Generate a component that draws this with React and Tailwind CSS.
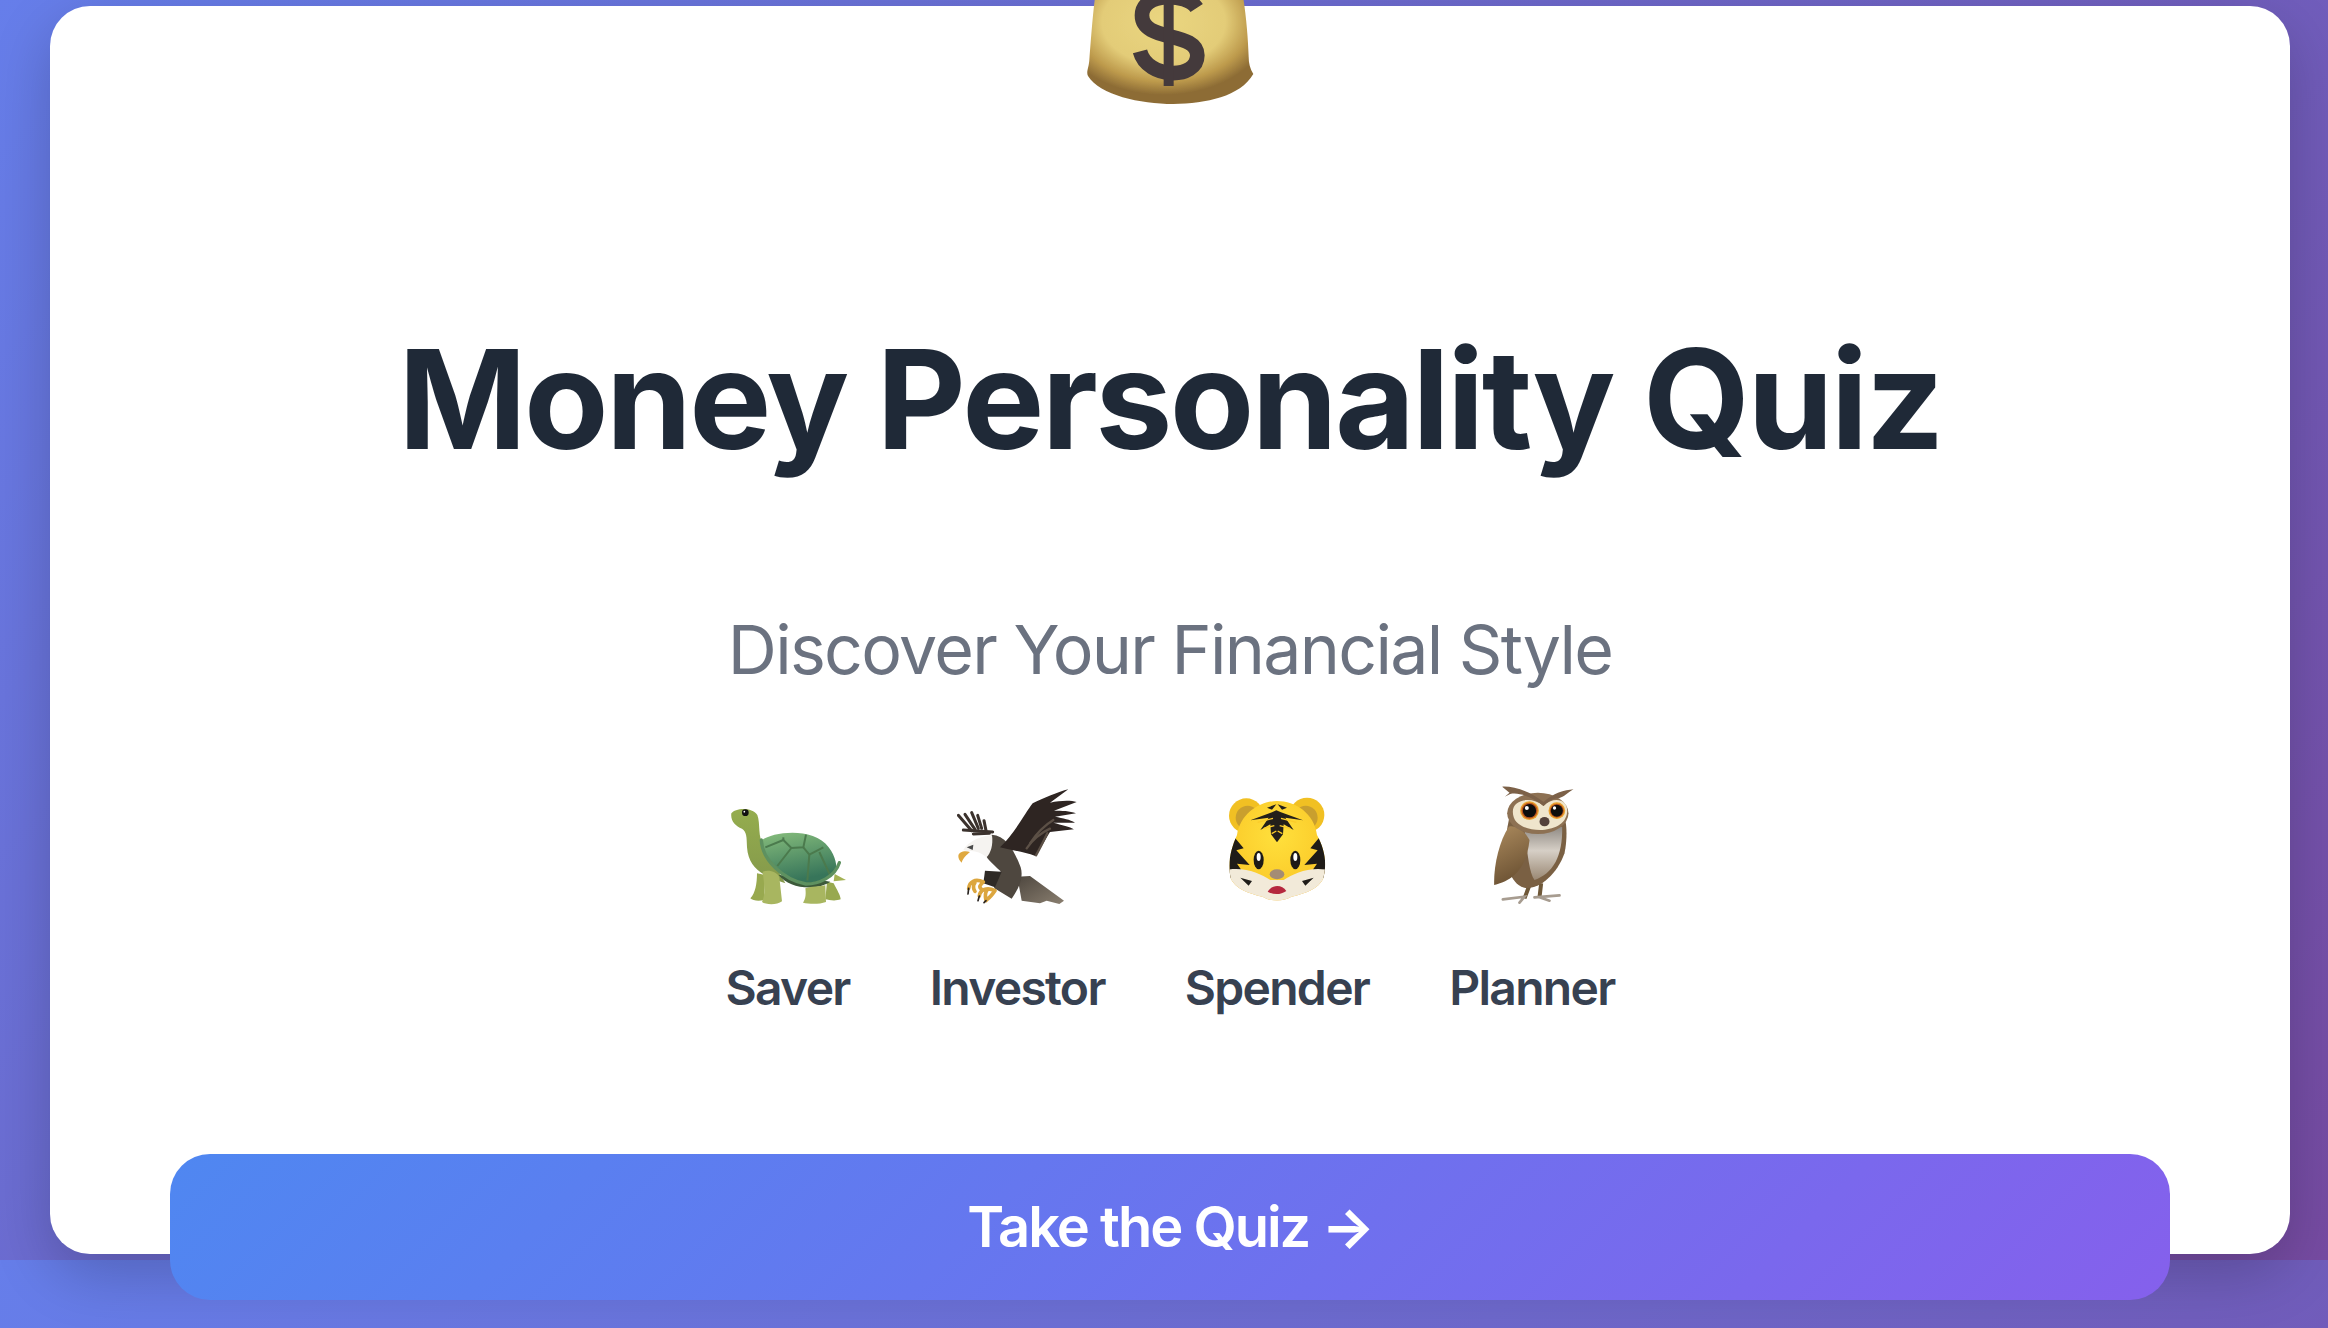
import React from 'react'

const MoneyBag = () => (
    <svg viewBox="240 0 540 330" className="w-[180px] h-[110px] -mt-[6px] shrink-0 overflow-visible">
        <defs>
            <radialGradient id="bagFill" cx="46%" cy="28%" r="64%">
                <stop offset="0%" stopColor="#ead680" />
                <stop offset="58%" stopColor="#e3cc78" />
                <stop offset="82%" stopColor="#bd9a4c" />
                <stop offset="100%" stopColor="#8d6c35" />
            </radialGradient>
            <filter id="bagSoft"><feGaussianBlur stdDeviation="2" /></filter>
        </defs>
        <path
            d="M288 -30 C278 40 272 130 268 180 C266 205 258 215 264 228 C300 285 420 312 520 312 C620 310 720 290 760 222 C750 205 746 190 746 170 C744 110 738 40 726 -30 Z"
            fill="url(#bagFill)"
            filter="url(#bagSoft)"
        />
        <g fill="none" stroke="#443a3c">
            <path d="M590 24 C560 -22 426 -24 426 46 C426 128 592 92 592 166 C592 240 442 238 420 154" strokeWidth="44" />
            <path d="M506 -20 L506 258" strokeWidth="30" />
        </g>
    </svg>
)

const Turtle = () => (
    <svg viewBox="78 75 360 360" className="w-[120px] h-[120px]">
        <defs>
            <linearGradient id="shell" x1="0" y1="0" x2="0.3" y2="1">
                <stop offset="0%" stopColor="#86bd7c" />
                <stop offset="100%" stopColor="#37755a" />
            </linearGradient>
            <linearGradient id="neck" x1="0" y1="0" x2="0" y2="1">
                <stop offset="0%" stopColor="#95ad4e" />
                <stop offset="100%" stopColor="#84994b" />
            </linearGradient>
        </defs>
        <path d="M398 342 L432 360 L395 364 Z" fill="#a4b255" />
        <path d="M165 340 L190 345 L186 420 C170 424 152 422 145 415 C160 400 165 370 165 340 Z" fill="#98a94f" />
        <path d="M375 365 L395 370 C405 390 415 405 416 418 C400 424 380 420 370 418 Z" fill="#98a94f" />
        <path d="M88 160 C100 143 150 140 166 165 C176 190 166 235 186 255 L250 370 C190 350 140 330 135 262 C134 230 134 215 120 206 C100 198 85 182 88 160 Z" fill="url(#neck)" />
        <path d="M230 345 C260 385 340 395 385 365 L300 350 Z" fill="#3c5a3a" />
        <path d="M180 240 C215 215 335 200 380 262 C402 290 405 320 402 332 C370 368 300 378 262 358 C220 336 190 300 180 240 Z" fill="url(#shell)" />
        <g fill="none" stroke="#4b7a4d" strokeWidth="6" strokeLinejoin="round">
            <path d="M190 262 L244 240 L268 264 L304 262 L312 224" />
            <path d="M244 232 L244 240" />
            <path d="M268 264 L226 318" />
            <path d="M304 262 L322 284 L316 362" />
            <path d="M322 284 L364 262" />
            <path d="M352 276 L384 345" />
        </g>
        <path d="M178 240 C180 300 245 360 312 372 C350 372 398 352 412 308" fill="none" stroke="#5e9160" strokeWidth="10" strokeLinecap="round" />
        <path d="M182 335 C200 328 226 335 232 352 L240 424 C225 436 190 434 180 426 C192 400 186 370 182 335 Z" fill="#a8b660" />
        <path d="M310 385 C330 378 350 380 370 376 L372 426 C350 434 320 432 303 428 C312 415 312 400 310 385 Z" fill="#a8b660" />
        <circle cx="130" cy="158" r="10" fill="#111" />
        <circle cx="127" cy="155" r="2.5" fill="#fff" />
    </svg>
)

const Eagle = () => (
    <svg viewBox="81 45 360 360" className="w-[120px] h-[120px]">
        <defs>
            <linearGradient id="tail" x1="0" y1="0" x2="1" y2="1">
                <stop offset="0%" stopColor="#4e473f" />
                <stop offset="100%" stopColor="#8a7f70" />
            </linearGradient>
        </defs>
        <path d="M262 320 L300 318 L402 392 L388 402 L350 392 L330 400 L275 392 Z" fill="url(#tail)" />
        <g stroke="#3b322d" strokeWidth="9" strokeLinecap="round" fill="none">
            <path d="M125 182 L85 136" />
            <path d="M135 178 L105 133" />
            <path d="M145 175 L125 128" />
            <path d="M155 175 L143 136" />
            <path d="M168 182 L162 152" />
            <path d="M100 180 L188 186" />
            <path d="M130 192 L178 190" />
        </g>
        <path d="M185 194 C230 198 252 240 272 292 C284 330 255 372 245 386 L192 354 L212 304 C178 272 160 258 168 240 Z" fill="#4e473f" />
        <path d="M165 302 L215 305 L195 352 L160 340 Z" fill="#2f2a26" />
        <path d="M100 240 C115 212 160 196 186 196 C190 225 182 250 170 262 C150 245 130 240 112 244 Z" fill="#f5f3f0" />
        <path d="M85 258 C85 246 105 240 120 246 C110 255 100 262 95 278 C88 272 85 265 85 258 Z" fill="#dfa83f" />
        <path d="M110 232 L130 224 L128 240 Z" fill="#4a4a4a" />
        <path d="M210 232 C250 195 285 130 308 100 C340 85 385 65 415 58 L360 98 C390 92 420 90 440 96 L372 122 C395 122 420 122 438 130 L375 140 C400 145 420 148 435 158 L370 158 C395 165 420 170 432 178 L360 186 C345 210 330 240 316 258 C280 245 240 240 210 232 Z" fill="#2e2522" />
        <g stroke="#5c5046" strokeWidth="7" strokeLinecap="round" fill="none">
            <path d="M300 220 C320 190 345 165 370 150" />
            <path d="M290 235 C310 205 330 190 360 176" />
            <path d="M318 256 C330 235 340 215 352 190" />
        </g>
        <g fill="none" strokeLinecap="round" strokeLinejoin="round">
            <path d="M160 336 C135 325 118 335 116 355 M135 338 C128 345 130 358 135 364 M160 336 C150 345 145 350 155 358" stroke="#dca63e" strokeWidth="11" />
            <path d="M195 362 C170 350 150 360 148 378 M172 358 C165 368 165 380 168 392 M195 362 C188 372 180 382 172 388" stroke="#dca63e" strokeWidth="11" />
            <path d="M116 355 L114 372 M148 378 L144 392 M168 392 L162 398" stroke="#2a2522" strokeWidth="5" />
        </g>
    </svg>
)

const Tiger = () => (
    <svg viewBox="0 0 360 360" className="w-[120px] h-[120px]">
        <defs>
            <radialGradient id="tigerFace" cx="50%" cy="42%" r="58%">
                <stop offset="0%" stopColor="#ffe03c" />
                <stop offset="72%" stopColor="#fbcb2a" />
                <stop offset="100%" stopColor="#eda91c" />
            </radialGradient>
            <clipPath id="tigerClip">
                <path d="M60 150 C70 85 130 48 180 48 C235 48 292 85 300 150 C322 190 332 235 318 282 C300 318 250 328 222 336 C200 350 160 350 138 336 C110 328 60 318 42 282 C30 235 42 190 60 150 Z" />
            </clipPath>
        </defs>
        <circle cx="88" cy="92" r="52" fill="#f1c023" />
        <circle cx="92" cy="98" r="36" fill="#c99f2e" />
        <circle cx="270" cy="90" r="52" fill="#f1c023" />
        <circle cx="266" cy="98" r="36" fill="#c99f2e" />
        <g clipPath="url(#tigerClip)">
            <rect width="360" height="360" fill="url(#tigerFace)" />
            <path d="M30 130 L80 190 L58 196 L98 240 L60 236 L78 262 L20 290 Z" fill="#1f1c18" />
            <path d="M330 130 L280 190 L302 196 L262 240 L300 236 L282 262 L340 290 Z" fill="#1f1c18" />
            <path d="M30 254 C85 245 130 265 160 285 L200 285 C230 265 275 245 330 254 L330 360 L30 360 Z" fill="#f2ead9" />
            <path d="M70 278 L105 288 L95 302 Z M290 278 L255 288 L265 302 Z" fill="#1f1c18" />
        </g>
        <g fill="#231f1a">
            <path d="M150 68 L178 58 L165 74 Z M210 68 L182 58 L195 74 Z" />
            <path d="M100 106 L165 82 L178 76 L192 82 L258 106 L205 98 L230 135 L200 118 L198 148 L180 172 L162 148 L160 118 L130 135 L155 98 Z" />
        </g>
        <g stroke="#fbcb2a" strokeWidth="4" fill="none">
            <path d="M122 112 L168 100 M238 112 L192 100" />
            <path d="M140 130 L172 122 M220 130 L188 122" />
            <path d="M164 146 L178 138 M196 146 L182 138" />
        </g>
        <ellipse cx="125" cy="225" rx="15" ry="28" fill="#1d1a17" />
        <ellipse cx="235" cy="225" rx="15" ry="28" fill="#1d1a17" />
        <ellipse cx="125" cy="216" rx="6" ry="12" fill="#fff" />
        <ellipse cx="235" cy="216" rx="6" ry="12" fill="#fff" />
        <ellipse cx="180" cy="268" rx="22" ry="15" fill="#a48c74" />
        <path d="M152 320 C165 298 195 298 208 318 C192 330 168 330 152 320 Z" fill="#b5283e" />
    </svg>
)

const Owl = () => (
    <svg viewBox="7.5 45 360 360" className="w-[120px] h-[120px]">
        <defs>
            <linearGradient id="owlWing" x1="0" y1="0" x2="0.3" y2="1">
                <stop offset="0%" stopColor="#ab8a5d" />
                <stop offset="100%" stopColor="#6d5334" />
            </linearGradient>
            <linearGradient id="owlChest" x1="0" y1="0" x2="0" y2="1">
                <stop offset="0%" stopColor="#8f8a84" />
                <stop offset="45%" stopColor="#d6cfc6" />
                <stop offset="100%" stopColor="#9a8873" />
            </linearGradient>
        </defs>
        <path d="M180 345 L165 385 M215 340 L210 382" stroke="#6f5838" strokeWidth="12" />
        <path d="M100 388 L165 380 L150 398 M195 382 L270 376 M210 382 L240 392" stroke="#a79c90" strokeWidth="8" strokeLinecap="round" fill="none" />
        <path d="M118 150 C100 230 105 330 160 352 C200 365 260 320 285 250 C295 200 292 150 280 130 Z" fill="#7a6043" />
        <path d="M165 180 C175 260 180 310 195 330 C250 310 280 260 278 170 Z" fill="url(#owlChest)" />
        <path d="M118 170 C88 215 72 290 74 345 C115 335 170 310 180 210 C165 180 135 165 118 170 Z" fill="url(#owlWing)" />
        <ellipse cx="205" cy="130" rx="92" ry="62" fill="#8d7153" />
        <path d="M130 125 C130 85 190 80 222 108 C250 80 295 85 293 125 C290 165 250 178 212 180 C170 178 130 165 130 125 Z" fill="#efe5cc" />
        <path d="M98 50 C130 48 180 62 222 96 C250 70 285 60 312 58 C295 68 285 80 270 84 C250 85 235 95 222 108 C195 85 150 65 122 72 L106 80 L120 68 Z" fill="#7c6148" />
        <circle cx="180" cy="122" r="28" fill="#e9a12d" />
        <circle cx="180" cy="122" r="24" fill="#b9521e" />
        <circle cx="180" cy="122" r="20" fill="#0d0d0d" />
        <circle cx="172" cy="114" r="6" fill="#fff" />
        <circle cx="262" cy="122" r="25" fill="#e9a12d" />
        <circle cx="262" cy="122" r="21" fill="#b9521e" />
        <circle cx="262" cy="122" r="18" fill="#0d0d0d" />
        <circle cx="255" cy="114" r="5" fill="#fff" />
        <ellipse cx="225" cy="155" rx="15" ry="14" fill="#54413a" />
    </svg>
)

const types = [
    { label: 'Saver', Icon: Turtle },
    { label: 'Investor', Icon: Eagle },
    { label: 'Spender', Icon: Tiger },
    { label: 'Planner', Icon: Owl },
]

const App = () => {
    return (
        <div className="w-[2328px] h-[1328px] overflow-hidden font-['Inter',sans-serif] bg-[linear-gradient(135deg,#667eea_0%,#764ba2_100%)] bg-[length:2328px_1260px] bg-repeat">
            <div className="pl-[50px] pr-[38px] pt-[6px]">
                <div className="h-[1248px] bg-white rounded-[40px] shadow-[0_20px_60px_rgba(0,0,0,0.2)] flex flex-col items-center">
                    <MoneyBag />
                    <h1 className="mt-[199px] text-[138px] leading-[180px] font-bold tracking-[-2.7px] text-[#1f2937]">Money Personality Quiz</h1>
                    <p className="mt-[112px] text-[68px] leading-[96px] tracking-[-1.7px] text-[#6b7280]">Discover Your Financial Style</p>
                    <div className="mt-[88px] flex gap-[80px]">
                        {types.map(({ label, Icon }) => (
                            <div key={label} className="flex flex-col items-center">
                                <Icon />
                                <span className="mt-[50px] text-[48px] leading-[66px] font-semibold tracking-[-1.7px] text-[#374151]">{label}</span>
                            </div>
                        ))}
                    </div>
                    <button className="relative z-10 mt-auto -mb-[46px] w-[2000px] h-[146px] shrink-0 rounded-[40px] bg-[linear-gradient(135deg,#4f87f1,#8560ec)] text-white text-[56px] font-semibold tracking-[-2px]">
                        Take the Quiz <span className="font-bold">→</span>
                    </button>
                </div>
            </div>
        </div>
    )
}

export default App
